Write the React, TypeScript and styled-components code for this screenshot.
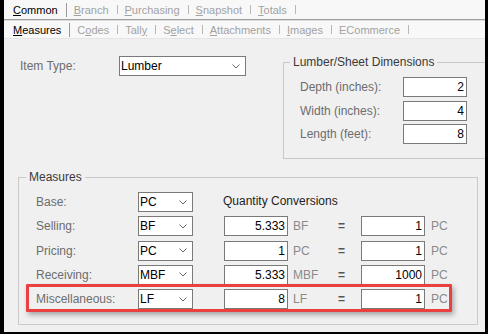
import React from "react";
import styled, { createGlobalStyle } from "styled-components";

const GlobalStyle = createGlobalStyle`
  html, body { margin: 0; padding: 0; background: #000; }
  body { font-family: "Liberation Sans", Arial, sans-serif; }
  * { box-sizing: border-box; }
`;

const Frame = styled.div`
  width: 488px;
  height: 334px;
  padding: 0 3px 2px 4px;
  background: #000;
`;

const Window = styled.div`
  width: 481px;
  height: 332px;
  background: #f0f0f0;
  overflow: hidden;
  display: flex;
  flex-direction: column;
  font-size: 12px;
  color: #6d6d6d;
`;

const TabStrip = styled.div<{ $level: "main" | "sub" }>`
  flex-shrink: 0;
  display: flex;
  align-items: center;
  background: #f8f8f8;
  padding-left: 2px;
  font-size: 11px;
  height: ${(p) => (p.$level === "main" ? 20 : 18)}px;
  margin-top: ${(p) => (p.$level === "main" ? 0 : 1)}px;
  border-bottom: 1px solid ${(p) => (p.$level === "main" ? "#9f9f9f" : "#e4e4e4")};
  ${(p) => (p.$level === "main" ? "box-shadow: 0 1px 0 #dcdcdc;" : "")}
`;

const Tab = styled.span<{ $active?: boolean }>`
  padding: 0 8px 0 7px;
  color: ${(p) => (p.$active ? "#000" : "#a2a2a2")};
  white-space: nowrap;
  u { text-decoration: underline; text-underline-offset: 1px; }
`;

const TabSep = styled.span<{ $tall?: boolean }>`
  width: 1px;
  height: ${(p) => (p.$tall ? 14 : 9)}px;
  background: ${(p) => (p.$tall ? "#9a9a9a" : "#b8b8b8")};
`;

const Body = styled.div`
  flex: 1;
  display: flex;
  flex-direction: column;
  padding: 16px 0 0 14px;
`;

const TopSection = styled.div`
  display: flex;
  align-items: flex-start;
`;

const ItemTypeRow = styled.div`
  flex-shrink: 0;
  width: 265px;
  display: grid;
  grid-template-columns: 99px 127px;
  align-items: center;
  padding-left: 2px;
  margin-top: 1px;
`;

const GroupBox = styled.fieldset<{ $width: number }>`
  flex-shrink: 0;
  margin: 0;
  padding: 0;
  min-width: 0;
  width: ${(p) => p.$width}px;
  border: 1px solid #c9c9c9;
`;

const Legend = styled.legend<{ $offset: number }>`
  padding: 0 3px;
  margin-left: ${(p) => p.$offset}px;
  font-size: 12px;
  line-height: 14px;
  color: #3a3a3a;
`;

const DimGrid = styled.div`
  display: grid;
  grid-template-columns: 103px 64px;
  row-gap: 3.5px;
  align-items: center;
  padding: 8px 0 14px 16px;
`;

const MeasuresBox = styled(GroupBox)`
  margin-top: 11px;
`;

const MeasureGrid = styled.div`
  position: relative;
  display: grid;
  grid-template-columns: 102px 86px 69px 37px 31px 70px auto;
  grid-auto-rows: 20px;
  row-gap: 4.25px;
  align-items: center;
  padding: 8px 0 15px 17px;
`;

const Label = styled.span`
  color: #6d6d6d;
  white-space: nowrap;
`;

const Combo = styled.div<{ $width: number }>`
  width: ${(p) => p.$width}px;
  height: 20px;
  border: 1px solid #7a7a7a;
  background: #fff;
  color: #000;
  display: flex;
  align-items: center;
  justify-content: space-between;
  padding: 0 5px 0 1px;
  line-height: 18px;
`;

const NumBox = styled.div`
  width: 64px;
  height: 20px;
  border: 1px solid #7a7a7a;
  background: #fff;
  color: #000;
  text-align: right;
  padding-right: 2px;
  line-height: 18px;
`;

const Unit = styled.span`
  color: #8a8a8a;
`;

const Eq = styled.span`
  color: #555;
  font-weight: bold;
  padding-left: 8px;
`;

const ConvTitle = styled.span`
  grid-column: 3 / -1;
  color: #1e1e1e;
  margin-left: -1px;
  margin-top: -3px;
`;

const Highlight = styled.div`
  position: absolute;
  left: 7px;
  top: 100px;
  width: 426px;
  height: 28px;
  border: 3px solid #ea4040;
  border-radius: 1px;
  box-shadow: 2px 3px 5px rgba(0, 0, 0, 0.3);
  pointer-events: none;
`;

const Chevron = () => (
  <svg width="8" height="5" viewBox="0 0 8 5">
    <polyline points="0.5,0.5 4,4 7.5,0.5" fill="none" stroke="#666" strokeWidth="1" />
  </svg>
);

const mainTabs: [string, string, string][] = [
  ["", "C", "ommon"],
  ["", "B", "ranch"],
  ["", "P", "urchasing"],
  ["", "S", "napshot"],
  ["", "T", "otals"],
];

const subTabs: [string, string, string][] = [
  ["", "M", "easures"],
  ["C", "o", "des"],
  ["Tall", "y", ""],
  ["S", "e", "lect"],
  ["", "A", "ttachments"],
  ["", "I", "mages"],
  ["ECommerce", "", ""],
];

type Row = {
  label: string;
  uom: string;
  qty: string;
  unit: string;
  base: string;
};

const rows: Row[] = [
  { label: "Selling:", uom: "BF", qty: "5.333", unit: "BF", base: "1" },
  { label: "Pricing:", uom: "PC", qty: "1", unit: "PC", base: "1" },
  { label: "Receiving:", uom: "MBF", qty: "5.333", unit: "MBF", base: "1000" },
  { label: "Miscellaneous:", uom: "LF", qty: "8", unit: "LF", base: "1" },
];

const dims = [
  ["Depth (inches):", "2"],
  ["Width (inches):", "4"],
  ["Length (feet):", "8"],
];

const Tabs = ({ items, level }: { items: [string, string, string][]; level: "main" | "sub" }) => (
  <TabStrip $level={level}>
    {items.map(([pre, key, post], i) => (
      <React.Fragment key={i}>
        <Tab $active={i === 0}>
          {pre}
          {key && <u>{key}</u>}
          {post}
        </Tab>
        <TabSep $tall={i === 0} />
      </React.Fragment>
    ))}
  </TabStrip>
);

export default function App() {
  return (
    <>
      <GlobalStyle />
      <Frame>
        <Window>
          <Tabs items={mainTabs} level="main" />
          <Tabs items={subTabs} level="sub" />
          <Body>
            <TopSection>
              <ItemTypeRow>
                <Label>Item Type:</Label>
                <Combo $width={127}>
                  <span>Lumber</span>
                  <Chevron />
                </Combo>
              </ItemTypeRow>
              <GroupBox $width={210}>
                <Legend $offset={6}>Lumber/Sheet Dimensions</Legend>
                <DimGrid>
                  {dims.map(([l, v]) => (
                    <React.Fragment key={l}>
                      <Label>{l}</Label>
                      <NumBox>{v}</NumBox>
                    </React.Fragment>
                  ))}
                </DimGrid>
              </GroupBox>
            </TopSection>
            <MeasuresBox $width={460}>
              <Legend $offset={7}>Measures</Legend>
              <MeasureGrid>
                <Label>Base:</Label>
                <Combo $width={55}>
                  <span>PC</span>
                  <Chevron />
                </Combo>
                <ConvTitle>Quantity Conversions</ConvTitle>
                {rows.map((r) => (
                  <React.Fragment key={r.label}>
                    <Label>{r.label}</Label>
                    <Combo $width={55}>
                      <span>{r.uom}</span>
                      <Chevron />
                    </Combo>
                    <NumBox>{r.qty}</NumBox>
                    <Unit>{r.unit}</Unit>
                    <Eq>=</Eq>
                    <NumBox>{r.base}</NumBox>
                    <Unit>PC</Unit>
                  </React.Fragment>
                ))}
                <Highlight />
              </MeasureGrid>
            </MeasuresBox>
          </Body>
        </Window>
      </Frame>
    </>
  );
}
